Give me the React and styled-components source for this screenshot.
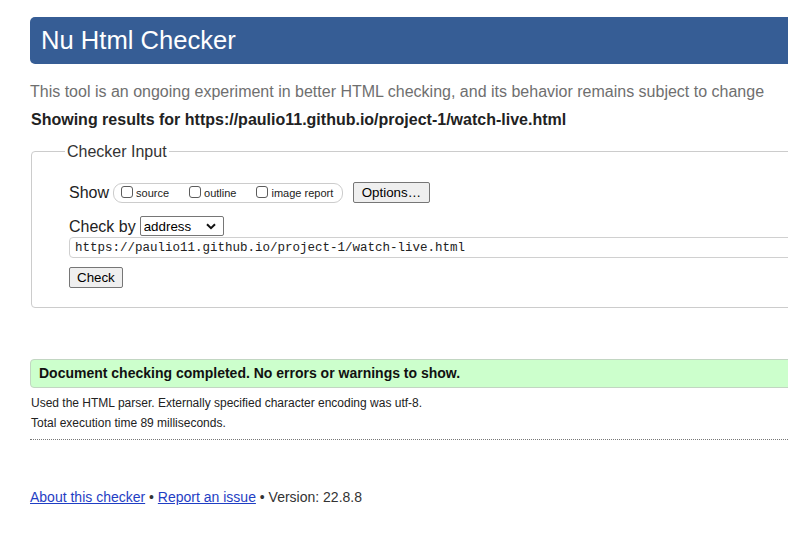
import React from "react";
import styled, { createGlobalStyle } from "styled-components";

const GlobalStyle = createGlobalStyle`
    html, body {
        margin: 0;
        padding: 0;
        background: #fff;
        overflow: hidden;
    }
    body {
        font-family: "Liberation Sans", Arial, sans-serif;
        color: #222;
    }
`;

const App = () => {
    return (
        <>
            <GlobalStyle />
            <Page>
                <Header>Nu Html Checker</Header>
                <Intro>
                    This tool is an ongoing experiment in better HTML checking, and its behavior remains subject to change
                </Intro>
                <ResultsFor>Showing results for https://paulio11.github.io/project-1/watch-live.html</ResultsFor>

                <InputFieldset>
                    <Legend>Checker Input</Legend>
                    <Row>
                        <RowLabel>Show</RowLabel>
                        <ShowGroup>
                            <CheckLabel>
                                <Checkbox type="checkbox" />
                                source
                            </CheckLabel>
                            <CheckLabel>
                                <Checkbox type="checkbox" />
                                outline
                            </CheckLabel>
                            <CheckLabel>
                                <Checkbox type="checkbox" />
                                image report
                            </CheckLabel>
                        </ShowGroup>
                        <Button $wide>Options…</Button>
                    </Row>
                    <Row $gap={13}>
                        <RowLabel>Check by</RowLabel>
                        <SelectWrap>
                            <Select defaultValue="address">
                                <option value="address">address</option>
                                <option value="file">file upload</option>
                                <option value="text">text input</option>
                            </Select>
                            <Chevron width="10" height="7" viewBox="0 0 10 7">
                                <path d="M1 1.2 L5 5.2 L9 1.2" fill="none" stroke="#111" strokeWidth="2" />
                            </Chevron>
                        </SelectWrap>
                    </Row>
                    <UrlInput defaultValue="https://paulio11.github.io/project-1/watch-live.html" />
                    <CheckButtonRow>
                        <Button>Check</Button>
                    </CheckButtonRow>
                </InputFieldset>

                <SuccessBar>Document checking completed. No errors or warnings to show.</SuccessBar>
                <Details>
                    <DetailLine>Used the HTML parser. Externally specified character encoding was utf-8.</DetailLine>
                    <DetailLine>Total execution time 89 milliseconds.</DetailLine>
                </Details>

                <Footer>
                    <FooterLink href="#about">About this checker</FooterLink>
                    {" • "}
                    <FooterLink href="#issue">Report an issue</FooterLink>
                    {" • Version: 22.8.8"}
                </Footer>
            </Page>
        </>
    );
};

const Page = styled.div`
    width: 1100px;
    padding: 17px 0 40px 30px;
`;

const Header = styled.h1`
    margin: 0;
    height: 47px;
    line-height: 46px;
    padding-left: 11px;
    background-color: #365d95;
    color: #fff;
    font-size: 25.6px;
    font-weight: normal;
    border-radius: 5px;
`;

const Intro = styled.p`
    margin: 18px 0 0;
    font-size: 16px;
    line-height: 19px;
    color: #6f6f6f;
`;

const ResultsFor = styled.p`
    margin: 9px 0 0 1px;
    font-size: 16px;
    line-height: 19px;
    font-weight: bold;
    color: #222;
`;

const InputFieldset = styled.fieldset`
    margin: 13px 0 0 1px;
    padding: 21px 0 19px 37px;
    border: 1px solid #cccccc;
    border-radius: 4px;
`;

const Legend = styled.legend`
    margin-left: -4px;
    padding: 0 2px;
    font-size: 16px;
    line-height: 19px;
    color: #333;
`;

const Row = styled.div`
    display: flex;
    align-items: center;
    margin-top: ${(p) => (p.$gap ? `${p.$gap}px` : "0")};
    height: ${(p) => (p.$gap ? "20px" : "21px")};
`;

const RowLabel = styled.span`
    font-size: 16px;
    line-height: 19px;
    color: #222;
    margin-right: 4px;
`;

const ShowGroup = styled.span`
    display: flex;
    align-items: center;
    gap: 20px;
    height: 18px;
    padding: 0 9px 0 7px;
    margin-right: 10px;
    border: 1px solid #cccccc;
    border-radius: 9px;
`;

const CheckLabel = styled.label`
    display: flex;
    align-items: center;
    gap: 3px;
    font-size: 11px;
    color: #222;
`;

const Checkbox = styled.input`
    appearance: none;
    margin: 0;
    width: 12px;
    height: 12px;
    border: 1px solid #5c5c5c;
    border-radius: 3px;
    background: #fff;
    position: relative;
    top: -1px;
`;

const Button = styled.button`
    height: 21px;
    padding: 0 ${(p) => (p.$wide ? "7.5px" : "7px")};
    font-family: "Liberation Sans", Arial, sans-serif;
    font-size: 13.33px;
    color: #000;
    background-color: #efefef;
    border: 1px solid #767676;
    border-radius: 2px;
`;

const SelectWrap = styled.span`
    position: relative;
    display: inline-flex;
`;

const Select = styled.select`
    appearance: none;
    width: 84px;
    height: 20px;
    padding: 0 0 0 3px;
    font-family: "Liberation Sans", Arial, sans-serif;
    font-size: 13.33px;
    color: #000;
    background: #fff;
    border: 1px solid #767676;
    border-radius: 2px;
`;

const Chevron = styled.svg`
    position: absolute;
    right: 8px;
    top: 7px;
    pointer-events: none;
`;

const UrlInput = styled.input`
    display: block;
    box-sizing: border-box;
    width: 1000px;
    height: 21px;
    margin-top: 1px;
    padding: 0 5px;
    font-family: "Liberation Mono", "DejaVu Sans Mono", monospace;
    font-size: 12.5px;
    color: #222;
    border: 1px solid #d0d0d0;
    border-radius: 4px;
    outline: none;
`;

const CheckButtonRow = styled.div`
    margin-top: 9px;
    display: flex;
`;

const SuccessBar = styled.p`
    margin: 51px 0 0;
    padding: 6px 8px;
    font-size: 14px;
    line-height: 15px;
    font-weight: bold;
    color: #111;
    background-color: #ccffcc;
    border: 1px solid #c2d6c2;
    border-radius: 4px;
`;

const Details = styled.div`
    margin-top: 5px;
    padding: 0 0 6px 1px;
    border-bottom: 1px dotted #777;
`;

const DetailLine = styled.p`
    margin: 0;
    font-size: 12px;
    line-height: 20px;
    color: #222;
`;

const Footer = styled.p`
    margin: 49px 0 0;
    font-size: 14px;
    line-height: 16px;
    color: #333;
`;

const FooterLink = styled.a`
    color: #1f3ec4;
    text-decoration: underline;
`;

export default App;
